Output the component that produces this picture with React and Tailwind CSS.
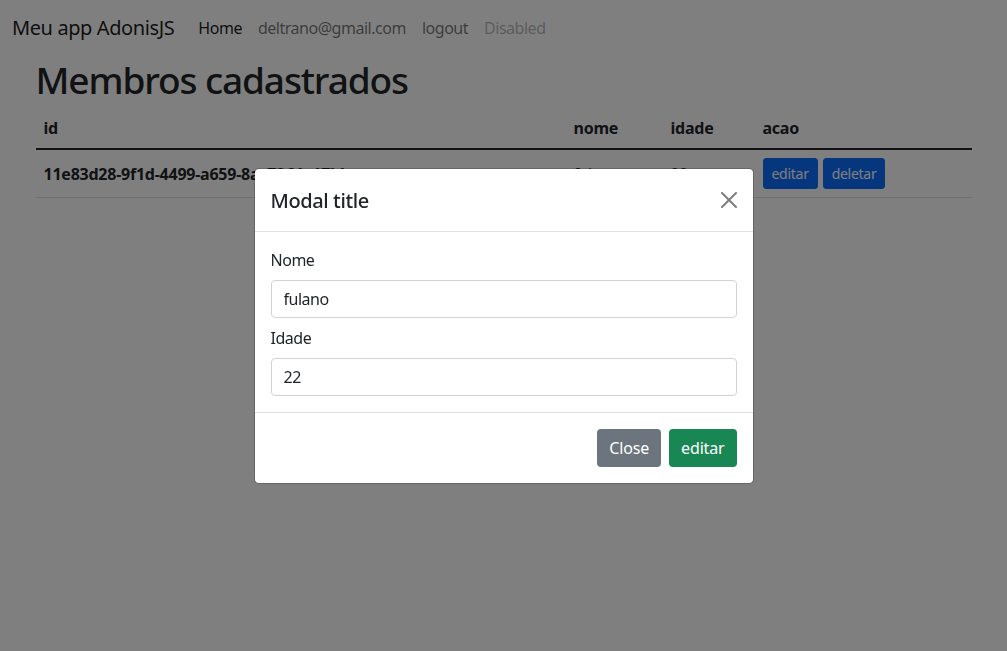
import React from 'react';

const font = { fontFamily: '"Noto Sans", "Open Sans", sans-serif' };

function Navbar() {
  return (
    <nav className="flex items-center px-3 py-2">
      <a className="mr-4 py-[5px] text-xl leading-[30px] tracking-[-0.02em] text-black/90">Meu app AdonisJS</a>
      <ul className="flex items-center">
        <li><a className="block px-2 py-2 leading-6 text-black/90">Home</a></li>
        <li><a className="block px-2 py-2 leading-6 text-black/55">deltrano@gmail.com</a></li>
        <li><a className="block px-2 py-2 leading-6 text-black/55">logout</a></li>
        <li><a className="block px-2 py-2 leading-6 text-black/30">Disabled</a></li>
      </ul>
    </nav>
  );
}

function MembersTable() {
  return (
    <div className="mx-auto max-w-[960px] px-3">
      <h1 className="mb-[6px] pt-[2px] text-[37px] font-medium leading-[1.2] tracking-[-0.03em]">Membros cadastrados</h1>
      <table className="w-full border-collapse text-left">
        <thead>
          <tr className="border-b-2 border-[#212529]">
            <th className="w-[530px] p-2 font-bold tracking-[-0.015em]">id</th>
            <th className="w-[97px] p-2 font-bold tracking-[-0.015em]">nome</th>
            <th className="w-[92px] p-2 font-bold tracking-[-0.015em]">idade</th>
            <th className="p-2 font-bold tracking-[-0.015em]">acao</th>
          </tr>
        </thead>
        <tbody>
          <tr className="border-b border-[#dee2e6]">
            <th className="p-2 font-bold tracking-[-0.015em]">11e83d28-9f1d-4499-a659-8ac7264e17bb</th>
            <td className="p-2">fulano</td>
            <td className="p-2">22</td>
            <td className="p-2">
              <div className="flex gap-[5px]">
                <button className="rounded-[3px] border border-[#0d6efd] bg-[#0d6efd] px-2 py-1 text-sm leading-[21px] tracking-[-0.02em] text-white">editar</button>
                <button className="rounded-[3px] border border-[#0d6efd] bg-[#0d6efd] px-2 py-1 text-sm leading-[21px] tracking-[-0.02em] text-white">deletar</button>
              </div>
            </td>
          </tr>
        </tbody>
      </table>
    </div>
  );
}

function Field({ label, value }) {
  return (
    <div className="mb-2 last:mb-0">
      <label className="mb-2 block leading-6">{label}</label>
      <input
        readOnly
        value={value}
        className="block h-[38px] w-full rounded-[4px] border border-[#ced4da] bg-white px-3 py-[6px] leading-6 tracking-[-0.03em] text-[#212529] outline-none"
        style={font}
      />
    </div>
  );
}

function EditModal() {
  return (
    <div className="fixed inset-0 flex items-center justify-center">
      <div className="w-[500px] rounded-[5px] border border-black/20 bg-white bg-clip-padding">
        <div className="flex items-center justify-between border-b border-[#dee2e6] p-4">
          <h5 className="pt-[3px] pb-[1px] text-xl font-medium leading-[26px] tracking-[-0.02em]">Modal title</h5>
          <button className="-mr-1 flex h-6 w-6 items-center justify-center opacity-50">
            <svg viewBox="0 0 16 16" className="h-4 w-4" fill="#000">
              <path d="M.293.293a1 1 0 011.414 0L8 6.586 14.293.293a1 1 0 111.414 1.414L9.414 8l6.293 6.293a1 1 0 01-1.414 1.414L8 9.414l-6.293 6.293a1 1 0 01-1.414-1.414L6.586 8 .293 1.707a1 1 0 010-1.414z" />
            </svg>
          </button>
        </div>
        <div className="p-4">
          <Field label="Nome" value="fulano" />
          <Field label="Idade" value="22" />
        </div>
        <div className="flex justify-end gap-2 border-t border-[#dee2e6] p-4">
          <button className="h-[38px] rounded-[4px] bg-[#6c757d] px-3 leading-6 tracking-[-0.01em] text-white">Close</button>
          <button className="h-[38px] rounded-[4px] bg-[#198754] px-3 leading-6 tracking-[-0.01em] text-white">editar</button>
        </div>
      </div>
    </div>
  );
}

export default function App() {
  return (
    <div className="relative h-[651px] overflow-hidden bg-white text-base tracking-[-0.03em] text-[#212529]" style={font}>
      <Navbar />
      <MembersTable />
      <div className="fixed inset-0 bg-black/50" />
      <EditModal />
    </div>
  );
}
